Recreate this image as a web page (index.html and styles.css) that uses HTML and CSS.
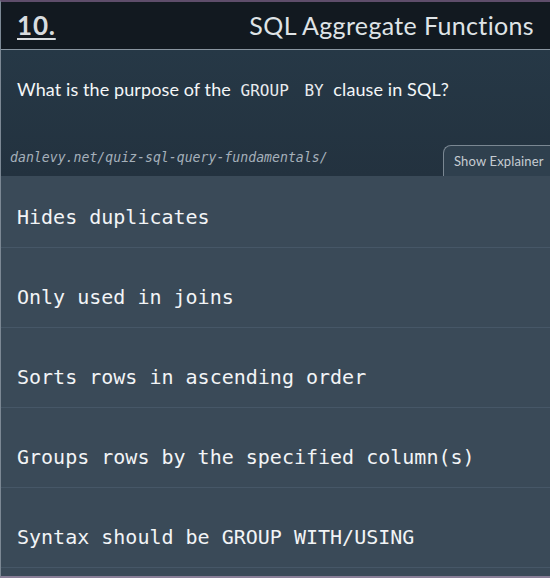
FILE: index.html
```html
<!DOCTYPE html>
<html>
<head>
<meta charset="utf-8">
<link rel="stylesheet" href="styles.css">
</head>
<body>
<div class="frame">
  <header class="head">
    <span class="num">10.</span>
    <span class="title">SQL Aggregate Functions</span>
  </header>
  <section class="question">
    <p class="q">What is the purpose of the <code>GROUP BY</code> clause in SQL?</p>
    <div class="meta">
      <span class="url">danlevy.net/quiz-sql-query-fundamentals/</span>
      <button class="explain">Show Explainer</button>
    </div>
  </section>
  <ul class="options">
    <li class="opt first">Hides duplicates</li>
    <li class="opt">Only used in joins</li>
    <li class="opt">Sorts rows in ascending order</li>
    <li class="opt">Groups rows by the specified column(s)</li>
    <li class="opt">Syntax should be GROUP WITH/USING</li>
  </ul>
</div>
</body>
</html>
```
FILE: styles.css
```css
* { box-sizing: border-box; }
html, body { margin: 0; padding: 0; }
body {
  width: 550px;
  height: 578px;
  overflow: hidden;
  background: #3a4a58;
  font-family: Lato, "Open Sans", sans-serif;
}
.frame {
  height: 578px;
  border-top: 2px solid #5e4d6a;
  border-bottom: 2px solid #8a7f98;
  border-left: 1px solid #7c8894;
  background: #3a4a58;
  display: flex;
  flex-direction: column;
}
.head {
  height: 48px;
  background: #121920;
  border-bottom: 1px solid #8995a0;
  display: flex;
  align-items: center;
  justify-content: space-between;
  padding: 0 16px 2px 16px;
  color: #e6e9ec;
}
.num {
  font-size: 26px;
  font-weight: 700;
  letter-spacing: 0.8px;
  text-decoration: underline;
  text-decoration-thickness: 2px;
  text-underline-offset: 3px;
  color: #d8dcdf;
}
.title {
  font-size: 25px;
  font-weight: 400;
  letter-spacing: 0.35px;
  color: #dfe3e6;
}
.question {
  height: 126px;
  background: linear-gradient(#263846, #23323f);
  display: flex;
  flex-direction: column;
  justify-content: space-between;
}
.q {
  margin: 27px 0 0 16px;
  font-size: 18px;
  letter-spacing: 0.1px;
  color: #f4f6f8;
  line-height: 24px;
}
.q code {
  font-family: "DejaVu Sans Mono", monospace;
  font-size: 16px;
  letter-spacing: 0;
  color: #e8ebee;
  padding: 0 5px;
  word-spacing: 6px;
}
.meta {
  display: flex;
  align-items: flex-end;
  justify-content: space-between;
}
.url {
  font-family: "DejaVu Sans Mono", monospace;
  font-style: italic;
  font-size: 13.2px;
  color: #a5b0ba;
  margin: 0 0 11px 9px;
}
.explain {
  font-family: Lato, "Open Sans", sans-serif;
  font-size: 13px;
  letter-spacing: 0.15px;
  color: #c6ccd2;
  background: #2f404e;
  border: 1px solid #7a8792;
  border-bottom: none;
  border-right: none;
  border-radius: 8px 0 0 0;
  padding: 7px 5px 7px 10px;
  height: 31px;
  width: 107px;
  text-align: left;
  white-space: nowrap;
}
.options {
  list-style: none;
  margin: 0;
  padding: 0;
  flex: 1;
}
.opt {
  font-family: "DejaVu Sans Mono", monospace;
  font-size: 20px;
  line-height: 24px;
  color: #f2f4f6;
  padding: 37px 16px 18px 16px;
  height: 80px;
  border-bottom: 1px solid #465767;
}
.opt.first {
  padding-top: 29px;
  height: 72px;
}
```
